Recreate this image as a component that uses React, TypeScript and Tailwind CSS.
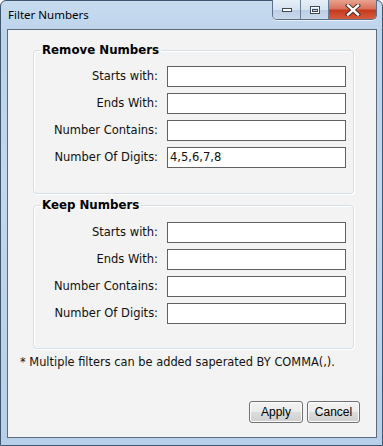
import React from "react";

const labels = ["Starts with:", "Ends With:", "Number Contains:", "Number Of Digits:"];

function Group({ title, values, cls }: { title: string; values: string[]; cls: string }) {
  return (
    <fieldset
      className={`w-[321px] rounded-[4px] border border-[#d5dfe5] shadow-[inset_1px_1px_0_#ffffff,1px_1px_0_#ffffff] ${cls}`}
    >
      <legend className="ml-[6px] px-[2px] text-[11.8px] font-bold leading-[17px] text-black">{title}</legend>
      <div className="grid grid-cols-[124px_179px] gap-x-[9px] gap-y-[6px]">
        {labels.map((l, i) => (
          <React.Fragment key={l}>
            <div className="text-right text-[11.5px] leading-[21px] text-[#111]">{l}</div>
            <div className="h-[21px] border border-[#616161] bg-white px-[2px] text-[11.5px] leading-[19px] text-[#111]">
              {values[i]}
            </div>
          </React.Fragment>
        ))}
      </div>
    </fieldset>
  );
}

function CaptionButtons() {
  return (
    <div className="-mt-[1px] flex h-[20px] overflow-hidden rounded-b-[5px] border border-t-0 border-[#5d6f88] shadow-[0_1px_0_#e8f0f8]">
      <div className="flex w-[28px] items-center justify-center border-r border-[#6b7d95] bg-[linear-gradient(#e6eef7_0%,#d6e3f1_50%,#bccde2_51%,#c9d9ec_100%)]">
        <svg width="12" height="6" viewBox="0 0 12 6">
          <rect x="1.5" y="1.5" width="9" height="3" fill="#fff" stroke="#3c4a5c" />
        </svg>
      </div>
      <div className="flex w-[28px] items-center justify-center border-r border-[#6b7d95] bg-[linear-gradient(#e6eef7_0%,#d6e3f1_50%,#bccde2_51%,#c9d9ec_100%)]">
        <svg width="12" height="10" viewBox="0 0 12 10">
          <rect x="1.5" y="1.5" width="9" height="7" fill="none" stroke="#3c4a5c" />
          <rect x="2.5" y="2.5" width="7" height="5" fill="none" stroke="#fff" />
          <rect x="3.5" y="4.5" width="5" height="2" fill="none" stroke="#3c4a5c" />
        </svg>
      </div>
      <div className="flex w-[47px] items-center justify-center bg-[linear-gradient(#e9a391_0%,#d9725a_45%,#c43b20_55%,#d65c3e_100%)]">
        <svg width="16" height="12" viewBox="0 0 16 12">
          <path d="M3 1.5 L13 10.5 M13 1.5 L3 10.5" stroke="#3b2a2a" strokeWidth="4.2" strokeLinecap="square" />
          <path d="M3 1.5 L13 10.5 M13 1.5 L3 10.5" stroke="#ffffff" strokeWidth="2.4" strokeLinecap="square" />
        </svg>
      </div>
    </div>
  );
}

function Btn({ label, w }: { label: string; w: string }) {
  return (
    <button
      className={`${w} h-[22px] rounded-[3px] border border-[#707070] bg-[linear-gradient(#f2f2f2_0%,#ebebeb_50%,#dddddd_51%,#cfcfcf_100%)] shadow-[inset_0_0_0_1px_#fcfcfc] text-[12px] leading-[18px] text-black`}
      style={{ fontFamily: '"Liberation Sans", Arial, sans-serif' }}
    >
      {label}
    </button>
  );
}

export default function App() {
  return (
    <div
      className="flex h-[446px] w-[383px] flex-col rounded-t-[6px] border border-[#3f5670] bg-[linear-gradient(180deg,#c8dbef_0%,#bcd3ec_8%,#c3d7ee_40%,#b8cfe9_100%)]"
      style={{ fontFamily: '"DejaVu Sans", Verdana, sans-serif' }}
    >
      <div className="flex h-[28px] items-start justify-between pl-[7px] pr-[5px]">
        <span
          className="mt-[6px] text-[11.5px] leading-[16px] text-black"
          style={{ fontFamily: '"Noto Sans", "Open Sans", sans-serif' }}
        >
          Filter Numbers
        </span>
        <CaptionButtons />
      </div>
      <div className="mb-[7px] ml-[6px] mr-[5px] flex flex-1 flex-col border border-[#5c6a7c] bg-[#f3f3f3]">
        <div className="pl-[25px] pt-[12px]">
          <Group title="Remove Numbers" values={["", "", "", "4,5,6,7,8"]} cls="pt-[7px] pb-[25px]" />
          <Group title="Keep Numbers" values={["", "", "", ""]} cls="mt-[3px] pt-[8px] pb-[24px]" />
        </div>
        <div className="mt-[5px] pl-[12px] text-[11.4px] leading-[16px] text-[#111]">
          * Multiple filters can be added saperated BY COMMA(,).
        </div>
        <div className="mt-auto flex justify-end gap-[4px] pb-[14px] pr-[16px]">
          <Btn label="Apply" w="w-[54px]" />
          <Btn label="Cancel" w="w-[53px]" />
        </div>
      </div>
    </div>
  );
}
